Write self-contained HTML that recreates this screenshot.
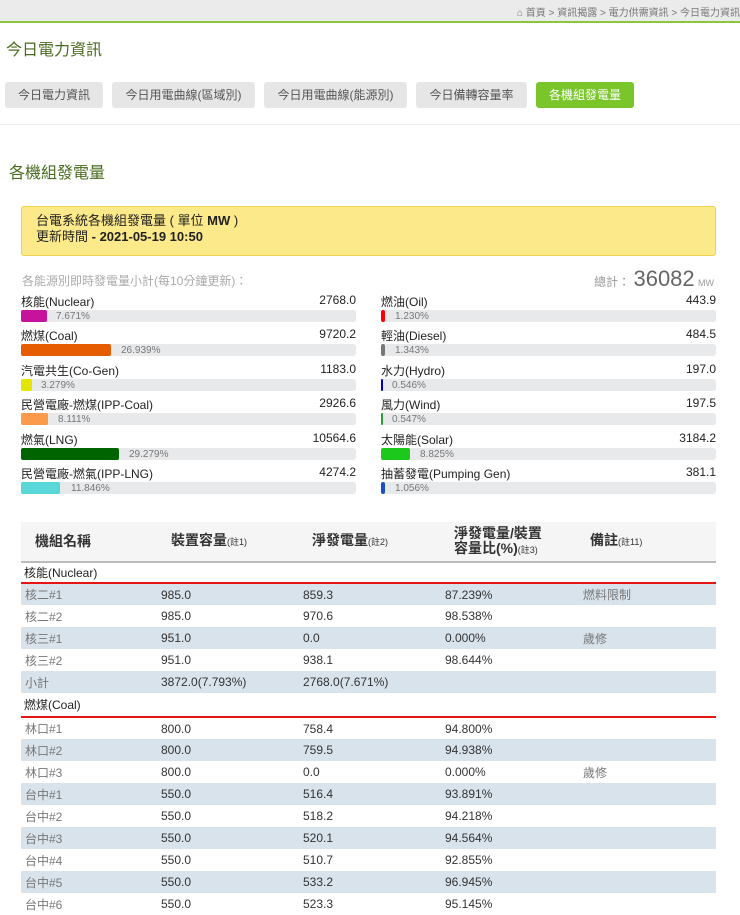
<!DOCTYPE html>
<html><head><meta charset="utf-8"><style>
*{margin:0;padding:0;box-sizing:border-box}
body{width:740px;height:905px;overflow:hidden;background:#fff;font-family:"Liberation Sans","Noto Sans CJK TC",sans-serif;color:#333;position:relative}
.top{position:absolute;left:0;top:0;width:740px;height:23px;background:#ebebeb;border-bottom:2px solid #8cc63f}
.crumb{position:absolute;right:0;top:4px;font-size:10px;color:#777;white-space:nowrap}
h1{position:absolute;left:6px;top:36px;font-size:16px;font-weight:normal;color:#4a6b1f}
.tab{position:absolute;top:82px;height:26px;line-height:26px;font-size:12px;color:#555;background:#e6e6e6;border-radius:3px;text-align:center}
.sep{position:absolute;left:0;top:124px;width:740px;height:1px;background:#eee}
h2{position:absolute;left:9px;top:159px;font-size:16px;font-weight:normal;color:#4a6b1f}
.yel{position:absolute;left:21px;top:206px;width:695px;height:50px;background:#fce98a;border:1px solid #f0d24e;border-radius:3px;padding:6px 14px;font-size:13px;line-height:16px;color:#222}
.sub{position:absolute;left:22px;top:272px;font-size:12px;color:#aaa}
.tot{position:absolute;right:26px;top:266px;color:#999;font-size:12px}
.tot b{font-weight:normal;font-size:22px;color:#666}
.it{position:absolute;width:335px;height:34px;font-size:12px;color:#222}
.it .n{position:absolute;left:0;top:-7px}
.it .v{position:absolute;right:0;top:-7px}
.it .bg{position:absolute;left:0;top:10px;width:335px;height:12px;background:#e8e9eb;border-radius:3px}
.it .f{position:absolute;left:0;top:10px;height:12px;border-radius:2px}
.it .p{position:absolute;top:11px;font-size:10px;color:#777;line-height:12px}
table{position:absolute;left:21px;top:522px;width:695px;border-collapse:collapse;font-size:12px}
th{height:40px;background:#f5f5f5;font-size:14px;font-weight:bold;color:#333;border-bottom:2px solid #bbb;text-align:left;line-height:15px}
th small{font-size:9px;font-weight:normal}
td{height:22px;padding-left:4px;color:#333}
tr.s td{background:#d8e3ec}
tr.c td{height:21px;border-bottom:2px solid #e81515;padding-left:3px;color:#222}
tr.c2 td{height:24px}
td.g{color:#777}
</style></head><body>
<div class="top"><div class="crumb">⌂ 首頁 &gt; 資訊揭露 &gt; 電力供需資訊 &gt; 今日電力資訊</div></div>
<h1>今日電力資訊</h1>
<div class="tab" style="left:5px;width:98px">今日電力資訊</div>
<div class="tab" style="left:112px;width:143px">今日用電曲線(區域別)</div>
<div class="tab" style="left:264px;width:143px">今日用電曲線(能源別)</div>
<div class="tab" style="left:416px;width:111px">今日備轉容量率</div>
<div class="tab" style="left:536px;width:98px;background:#7ac52a;color:#fff">各機組發電量</div>
<div class="sep"></div>
<h2>各機組發電量</h2>
<div class="yel">台電系統各機組發電量 ( 單位 <b>MW</b> )<br>更新時間 <b>- 2021-05-19 10:50</b></div>
<div class="sub">各能源別即時發電量小計(每10分鐘更新)：</div>
<div class="tot">總計： <b>36082</b> <span style="font-size:9px">MW</span></div>

<div class="it" style="left:21px;top:300px"><span class="n">核能(Nuclear)</span><span class="v">2768.0</span><div class="bg"></div><div class="f" style="width:26px;background:#c7139b"></div><span class="p" style="left:35px">7.671%</span></div>
<div class="it" style="left:21px;top:334px"><span class="n">燃煤(Coal)</span><span class="v">9720.2</span><div class="bg"></div><div class="f" style="width:90px;background:#e65c00"></div><span class="p" style="left:100px">26.939%</span></div>
<div class="it" style="left:21px;top:369px"><span class="n">汽電共生(Co-Gen)</span><span class="v">1183.0</span><div class="bg"></div><div class="f" style="width:11px;background:#e4e400"></div><span class="p" style="left:20px">3.279%</span></div>
<div class="it" style="left:21px;top:403px"><span class="n">民營電廠-燃煤(IPP-Coal)</span><span class="v">2926.6</span><div class="bg"></div><div class="f" style="width:27px;background:#fb9a4a"></div><span class="p" style="left:37px">8.111%</span></div>
<div class="it" style="left:21px;top:438px"><span class="n">燃氣(LNG)</span><span class="v">10564.6</span><div class="bg"></div><div class="f" style="width:98px;background:#006400"></div><span class="p" style="left:108px">29.279%</span></div>
<div class="it" style="left:21px;top:472px"><span class="n">民營電廠-燃氣(IPP-LNG)</span><span class="v">4274.2</span><div class="bg"></div><div class="f" style="width:39px;background:#5ad8d8"></div><span class="p" style="left:50px">11.846%</span></div>

<div class="it" style="left:381px;top:300px"><span class="n">燃油(Oil)</span><span class="v">443.9</span><div class="bg"></div><div class="f" style="width:4px;background:#f00"></div><span class="p" style="left:14px">1.230%</span></div>
<div class="it" style="left:381px;top:334px"><span class="n">輕油(Diesel)</span><span class="v">484.5</span><div class="bg"></div><div class="f" style="width:4px;background:#777"></div><span class="p" style="left:14px">1.343%</span></div>
<div class="it" style="left:381px;top:369px"><span class="n">水力(Hydro)</span><span class="v">197.0</span><div class="bg"></div><div class="f" style="width:2px;background:#0000c0"></div><span class="p" style="left:11px">0.546%</span></div>
<div class="it" style="left:381px;top:403px"><span class="n">風力(Wind)</span><span class="v">197.5</span><div class="bg"></div><div class="f" style="width:2px;background:#2a9a3a"></div><span class="p" style="left:11px">0.547%</span></div>
<div class="it" style="left:381px;top:438px"><span class="n">太陽能(Solar)</span><span class="v">3184.2</span><div class="bg"></div><div class="f" style="width:29px;background:#1dc81d"></div><span class="p" style="left:39px">8.825%</span></div>
<div class="it" style="left:381px;top:472px"><span class="n">抽蓄發電(Pumping Gen)</span><span class="v">381.1</span><div class="bg"></div><div class="f" style="width:4px;background:#1a4fc7"></div><span class="p" style="left:14px">1.056%</span></div>

<table>
<colgroup><col style="width:136px"><col style="width:142px"><col style="width:142px"><col style="width:138px"><col></colgroup>
<tr><th style="padding-left:14px">機組名稱</th><th style="padding-left:14px">裝置容量<small>(註1)</small></th><th style="padding-left:13px">淨發電量<small>(註2)</small></th><th style="padding-left:13px">淨發電量/裝置<br>容量比(%)<small>(註3)</small></th><th style="padding-left:11px">備註<small>(註11)</small></th></tr>
<tr class="c"><td colspan="5">核能(Nuclear)</td></tr>
<tr class="s"><td class="g">核二#1</td><td>985.0</td><td>859.3</td><td>87.239%</td><td class="g">燃料限制</td></tr>
<tr><td class="g">核二#2</td><td>985.0</td><td>970.6</td><td>98.538%</td><td></td></tr>
<tr class="s"><td class="g">核三#1</td><td>951.0</td><td>0.0</td><td>0.000%</td><td class="g">歲修</td></tr>
<tr><td class="g">核三#2</td><td>951.0</td><td>938.1</td><td>98.644%</td><td></td></tr>
<tr class="s"><td class="g">小計</td><td>3872.0(7.793%)</td><td>2768.0(7.671%)</td><td></td><td></td></tr>
<tr class="c c2"><td colspan="5">燃煤(Coal)</td></tr>
<tr><td class="g">林口#1</td><td>800.0</td><td>758.4</td><td>94.800%</td><td></td></tr>
<tr class="s"><td class="g">林口#2</td><td>800.0</td><td>759.5</td><td>94.938%</td><td></td></tr>
<tr><td class="g">林口#3</td><td>800.0</td><td>0.0</td><td>0.000%</td><td class="g">歲修</td></tr>
<tr class="s"><td class="g">台中#1</td><td>550.0</td><td>516.4</td><td>93.891%</td><td></td></tr>
<tr><td class="g">台中#2</td><td>550.0</td><td>518.2</td><td>94.218%</td><td></td></tr>
<tr class="s"><td class="g">台中#3</td><td>550.0</td><td>520.1</td><td>94.564%</td><td></td></tr>
<tr><td class="g">台中#4</td><td>550.0</td><td>510.7</td><td>92.855%</td><td></td></tr>
<tr class="s"><td class="g">台中#5</td><td>550.0</td><td>533.2</td><td>96.945%</td><td></td></tr>
<tr><td class="g">台中#6</td><td>550.0</td><td>523.3</td><td>95.145%</td><td></td></tr>
</table>
</body></html>
